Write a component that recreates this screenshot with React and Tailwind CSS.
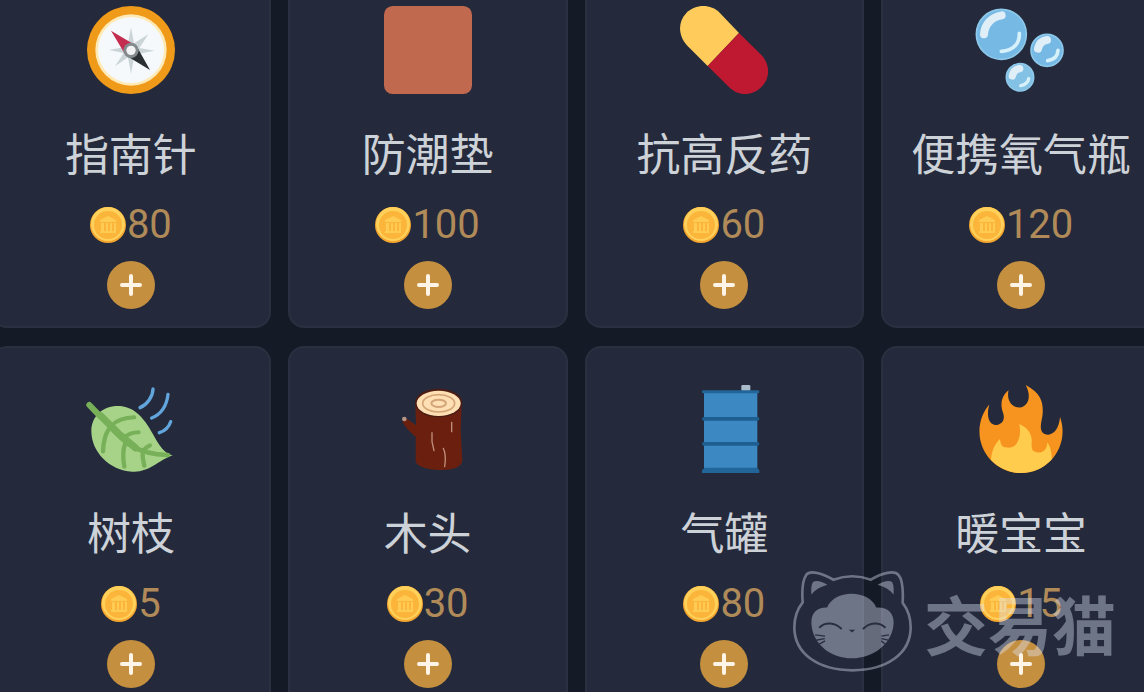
function Compass() {
  return (
    <svg viewBox="79 18 264 264" className="w-22 h-22" aria-hidden="true">
      <circle cx="211" cy="150" r="132" fill="#f09a1a" />
      <circle cx="211" cy="150" r="107" fill="#ffe9b5" />
      <circle cx="211" cy="150" r="99" fill="#f6f9fc" />
      <path d="M211 82l9 48 43-27-27 41 45 8-45 9 25 38-41-27-9 50-9-50-39 27 26-40-44-9 44-8-26-40 39 28z" fill="#cbd5d8" />
      <path d="M151 92l76 45-32 29z" fill="#c42d50" />
      <path d="M268 210l-73-44 32-29z" fill="#292f33" />
      <circle cx="211" cy="151" r="23" fill="#84898d" />
      <circle cx="211" cy="151" r="14" fill="#f0f2f3" />
    </svg>
  )
}

function Mat() {
  return (
    <svg viewBox="42 18 264 264" className="w-22 h-22" aria-hidden="true">
      <rect x="42" y="18" width="264" height="264" rx="26" fill="#c1694f" />
    </svg>
  )
}

function Pill() {
  return (
    <svg viewBox="60 18 264 264" className="w-22 h-22" aria-hidden="true">
      <path d="M143 198L82 137C55 110 52 66 79 39s73-28 100-1l58 61z" fill="#ffcc5b" />
      <path d="M143 198l94-99 64 63c30 29 31 70 4 98s-67 30-95 4z" fill="#be1931" />
    </svg>
  )
}

function Bubbles() {
  return (
    <svg viewBox="51 18 264 264" className="w-22 h-22 overflow-visible" fill="none" strokeLinecap="round" aria-hidden="true">
      <circle cx="124" cy="103" r="75" fill="#75b9e4" stroke="#8ec8ea" strokeWidth="5" />
      <path d="M72 103c2-30 22-52 53-57" stroke="#e0eef8" strokeWidth="24" />
      <path d="M178 100c1 30-17 52-54 54" stroke="#d7f1fb" strokeWidth="11" />
      <circle cx="261" cy="151" r="48" fill="#75b9e4" stroke="#8ec8ea" strokeWidth="5" />
      <path d="M234 146c3-14 12-24 27-26" stroke="#e0eef8" strokeWidth="24" />
      <path d="M294 151c-1 18-12 28-31 31" stroke="#d7f1fb" strokeWidth="11" />
      <circle cx="180" cy="232" r="41" fill="#83c1e5" stroke="#8ec8ea" strokeWidth="5" />
      <path d="M157 228c2-12 10-20 22-22" stroke="#e0eef8" strokeWidth="22" />
      <path d="M206 236c-2 12-10 18-24 21" stroke="#d7f1fb" strokeWidth="10" />
    </svg>
  )
}

function Leaf() {
  return (
    <svg viewBox="51 30 264 264" className="w-22 h-22 overflow-visible" fill="none" strokeLinecap="round" aria-hidden="true">
      <path d="M308 241c-25-5-39-28-56-58-23-43-51-85-101-90-47-4-87 27-87 75 0 62 53 118 123 122 50 3 75-32 121-49z" fill="#a6d388" />
      <g stroke="#77b058">
        <path d="M58 91l58 58c40 48 78 88 178 91" strokeWidth="14" />
        <path d="M58 90l30 31" strokeWidth="18" />
        <path d="M92 122l53 53 52 44" strokeWidth="21" />
        <path d="M124 152c18-18 40-24 69-25M162 189c11-11 28-17 44-17M220 228c3-7 9-12 20-17" strokeWidth="12" />
        <path d="M116 163c-12 18-16 38-17 66M166 205c-9 22-8 42-3 70M218 234c-1 16 2 25 5 38" strokeWidth="13" />
      </g>
      <path d="M249 42c0 23-19 48-39 56M294 58c-4 35-17 58-49 71M302 140c-6 18-16 27-34 33" stroke="#62a5dc" strokeWidth="10" />
    </svg>
  )
}

function Log() {
  return (
    <svg viewBox="12 30 264 264" className="w-22 h-22" fill="none" strokeLinecap="round" aria-hidden="true">
      <path d="M106 83h139l-3 85 5 88c-1 22-30 29-65 29-42 0-75-13-75-27v-73c-12-10-26-22-37-40-5-8 5-18 13-12l25 18z" fill="#6b200f" />
      <circle cx="73" cy="132" r="7" fill="#b59485" />
      <ellipse cx="176" cy="84" rx="71" ry="43" fill="#4a1c14" />
      <ellipse cx="176" cy="85" rx="66" ry="38" fill="#ffe0b5" />
      <ellipse cx="176" cy="85" rx="48" ry="26" stroke="#d4a578" strokeWidth="5" />
      <ellipse cx="176" cy="85" rx="22" ry="11" stroke="#d4a578" strokeWidth="6" />
      <path d="M156 173v27l6 27M215 142v28M190 220c7 15 8 30 4 55" stroke="#c18d7c" strokeWidth="4" />
    </svg>
  )
}

function Barrel() {
  return (
    <svg viewBox="30 30 264 264" className="w-22 h-22" aria-hidden="true">
      <rect x="214" y="30" width="27" height="18" rx="4" fill="#a9bacb" />
      <rect x="102" y="50" width="160" height="240" fill="#3b88c3" />
      <rect x="96" y="46" width="172" height="9" rx="4" fill="#226699" />
      <rect x="96" y="126" width="172" height="11" rx="5" fill="#1d5f90" />
      <rect x="96" y="201" width="172" height="11" rx="5" fill="#1d5f90" />
      <path d="M104 278h157l7 8v8H96v-8z" fill="#226699" />
    </svg>
  )
}

function Fire() {
  return (
    <svg viewBox="0 0 36 36" className="w-22 h-22" aria-hidden="true">
      <path d="M35 19c0-2.062-.367-4.039-1.04-5.868-.46 5.389-3.333 8.157-6.335 6.868-2.812-1.208-.917-5.917-.777-8.164.236-3.809-.012-8.169-6.931-11.794 2.875 5.5.333 8.917-2.333 9.125-2.958.231-5.667-2.542-4.667-7.042-3.238 2.386-3.332 6.402-2.333 9 1.042 2.708-.042 4.958-2.583 5.208-2.84.28-4.418-3.041-2.963-8.333C2.52 10.965 1 14.805 1 19c0 9.389 7.611 17 17 17s17-7.611 17-17z" fill="#f79420" />
      <path d="M5.700 30.600c.3-3.600 1.500-6.300 3.700-8.500.2 2 .7 3.200 2.100 3.400 1.500.2 2.900.3 4-.7 2-2 2.500-5.500 1.800-8.800 3.200 1.400 5.100 3.800 5.100 6.800-.1 2-.2 3.600.9 4.300 1.200.6 2.700.7 3.800 0 1.100-.8 1.600-2 1.700-3.600 1 1.300 1.700 3.200 1.800 6.900A17 17 0 0118 36c-4.800 0-9.200-2-12.300-5.400z" fill="#ffcc4d" />
    </svg>
  )
}

function Coin() {
  return (
    <svg viewBox="0 0 36 36" className="w-9 h-9" aria-hidden="true">
      <circle cx="18" cy="18" r="18" fill="#f4a52e" />
      <circle cx="18" cy="17" r="17" fill="#ffd05a" />
      <circle cx="18" cy="18" r="14" fill="#fbb53a" />
      <path d="M10 13l8-4 8 4v2H10zM11 16h3v8h-3zM16 16h2v8h-2zM20 16h2v8h-2zM24 16h2v8h-2zM10 24h16v2H10z" fill="#ffcb52" />
    </svg>
  )
}

function CatLogo() {
  return (
    <svg viewBox="36 36 356 302" className="w-[119px] h-[101px]" fill="none" aria-hidden="true">
      <path d="M65 130C62 92 66 61 76 47c12-15 48-4 81 15 38-14 75-14 112 0 34-21 70-29 83-14 12 14 14 45 12 83 15 20 24 44 24 73 0 80-73 129-174 129S40 284 40 204c0-29 9-54 25-74z" stroke="currentColor" strokeWidth="8" />
      <path d="M91 106c-1-20 0-32 6-38 11-5 27 1 42 9-21 6-37 15-48 29zM337 106c1-20 0-32-6-38-11-5-27 1-42 9 21 6 37 15 48 29z" fill="currentColor" />
      <path d="M138 145c11-26 40-41 73-41s64 15 74 41c34-2 52 16 52 44 0 60-58 108-125 108S91 249 91 189c0-28 17-45 47-44z" fill="currentColor" />
      <path d="M116 204c17-16 44-15 64 4M247 208c19-19 46-20 64-4" stroke="#292f40" strokeWidth="6" strokeLinecap="round" />
      <path d="M203 212h19l-9 8z" fill="#292f40" />
      <path d="M102 227l30 4M105 243l26-5M111 257l21-12M323 227l-23 4M321 243l-21-5M315 257l-15-12" stroke="#292f40" strokeWidth="4" />
    </svg>
  )
}

const items = [
  { name: '指南针', price: 80, Icon: Compass },
  { name: '防潮垫', price: 100, Icon: Mat },
  { name: '抗高反药', price: 60, Icon: Pill },
  { name: '便携氧气瓶', price: 120, Icon: Bubbles },
  { name: '树枝', price: 5, Icon: Leaf },
  { name: '木头', price: 30, Icon: Log },
  { name: '气罐', price: 80, Icon: Barrel },
  { name: '暖宝宝', price: 15, Icon: Fire },
]

function ItemCard({ name, price, Icon }) {
  return (
    <li className="flex flex-col items-center rounded-2xl border-2 border-[#2a3040] bg-[#242a3b] pt-[37px] pb-[17px]">
      <Icon />
      <h2 className="mt-7 text-[44px] leading-[60px] whitespace-nowrap text-[#cdd2d8]">{name}</h2>
      <div className="mt-[23px] flex h-10 items-center gap-px">
        <Coin />
        <span className="font-['Roboto',sans-serif] text-[40px] leading-10 text-[#b08a58]">{price}</span>
      </div>
      <button aria-label={`添加${name}`} className="mt-4 flex h-12 w-12 items-center justify-center rounded-full bg-[#c58f40]">
        <svg viewBox="0 0 22 22" className="h-[22px] w-[22px]" stroke="#fff5e6" strokeWidth="4" strokeLinecap="round" aria-hidden="true">
          <path d="M11 2v18M2 11h18" />
        </svg>
      </button>
    </li>
  )
}

export default function App() {
  return (
    <main className="relative h-screen overflow-hidden bg-[#141a26] font-['Noto_Sans_CJK_SC',sans-serif]">
      <ul className="-mt-[33px] -mr-[17px] -ml-[9px] grid grid-cols-4 gap-x-[17px] gap-y-[18px]">
        {items.map(item => <ItemCard key={item.name} {...item} />)}
      </ul>
      <div className="pointer-events-none absolute right-7 bottom-5 flex items-center gap-3 text-[#dfe6fa]/40">
        <CatLogo />
        <span className="text-[64px] leading-[90px] font-bold">交易猫</span>
      </div>
    </main>
  )
}
